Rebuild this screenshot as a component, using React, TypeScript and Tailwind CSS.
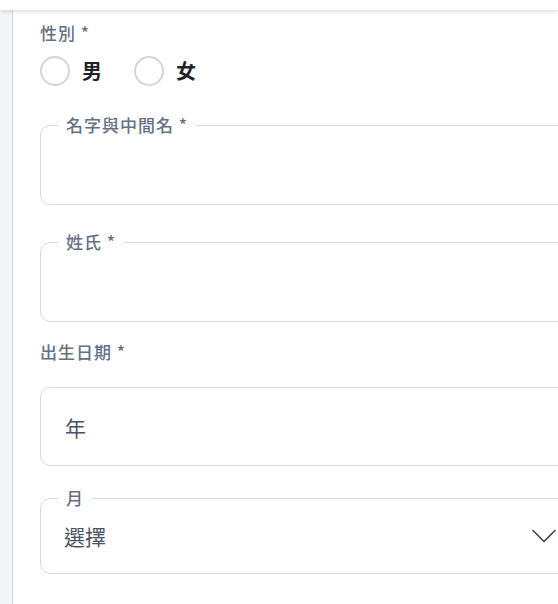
// outlined input with the label sitting in the top border
function OutlinedField({ label, height, children }: { label: string; height: string; children?: React.ReactNode }) {
    return (
        <fieldset className={`${height} rounded-[10px] border-[1.5px] border-[#d6dae1] pl-[17px] pr-[18px]`}>
            <legend className="px-2 text-[17px] font-medium leading-5 tracking-[1px] text-[#667085]">{label}</legend>
            {children}
        </fieldset>
    )
}

function Radio({ label }: { label: string }) {
    return (
        <label className="flex items-center gap-[12px]">
            <span className="h-[30px] w-[30px] rounded-full border-[2.5px] border-[#d1d5dc] bg-white" />
            <span className="text-[20px] font-bold leading-6 text-[#1f2329]">{label}</span>
        </label>
    )
}

function Chevron() {
    return (
        <svg width="24" height="14" viewBox="0 0 24 14" fill="none" className="text-[#3b4150]">
            <path d="M1 1.5 L12 12.5 L23 1.5" stroke="currentColor" strokeWidth="1.6" strokeLinecap="round" strokeLinejoin="round" />
        </svg>
    )
}

export default function App() {
    return (
        <div className="flex h-[604px] w-[558px] flex-col overflow-hidden bg-white font-['Noto_Sans_CJK_TC',sans-serif]">
            {/* top bar */}
            <div className="relative z-10 h-[10px] shrink-0 bg-white shadow-[0_2px_4px_rgba(0,0,0,0.12)]" />

            <div className="flex flex-1">
                {/* side rail */}
                <div className="w-[13px] shrink-0 border-r border-[#d4d7dd] bg-[#f4f5f7]" />

                <div className="flex w-[562px] shrink-0 flex-col pl-[27px] pt-[13px]">
                    <div className="text-[17px] font-medium leading-5 tracking-[1px] text-[#667085]">性別 *</div>
                    <div className="mt-[13px] flex h-[30px] items-center gap-[32px]">
                        <Radio label="男" />
                        <Radio label="女" />
                    </div>

                    <div className="mt-[29px]">
                        <OutlinedField label="名字與中間名 *" height="h-[90px]" />
                    </div>
                    <div className="mt-[27px]">
                        <OutlinedField label="姓氏 *" height="h-[90px]" />
                    </div>

                    <div className="mt-[20px] text-[17px] font-medium leading-5 tracking-[1px] text-[#667085]">出生日期 *</div>
                    <div className="mt-[25px] flex h-[79px] items-center rounded-[10px] border-[1.5px] border-[#d6dae1] pl-[24px]">
                        <span className="text-[21px] leading-7 text-[#4a5263]">年</span>
                    </div>

                    <div className="mt-[22px]">
                        <OutlinedField label="月" height="h-[86px]">
                            <div className="mt-[14px] flex items-center justify-between pl-[6px]">
                                <span className="text-[21px] leading-7 text-[#4a5263]">選擇</span>
                                <Chevron />
                            </div>
                        </OutlinedField>
                    </div>
                </div>
            </div>
        </div>
    )
}
